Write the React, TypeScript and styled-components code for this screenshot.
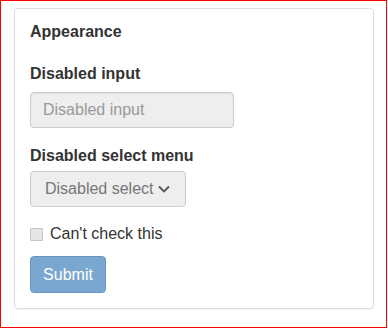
import styled, { createGlobalStyle } from 'styled-components'

export default function App() {
  return (
    <>
      <GlobalStyle />
      <Frame>
        <Card>
          <Title>Appearance</Title>

          <Field $gap={8} $after={18}>
            <Label>Disabled input</Label>
            <TextInput disabled placeholder="Disabled input" />
          </Field>

          <Field $gap={5} $after={17}>
            <Label>Disabled select menu</Label>
            <SelectBox aria-disabled="true">
              <span>Disabled select</span>
              <svg width="12" height="8" viewBox="0 0 12 8" aria-hidden="true">
                <path d="M1 1.5l5 5 5-5" fill="none" stroke="#555" strokeWidth="1.8" />
              </svg>
            </SelectBox>
          </Field>

          <CheckRow>
            <CheckBox type="checkbox" disabled />
            <span>Can&apos;t check this</span>
          </CheckRow>

          <SubmitBtn disabled>Submit</SubmitBtn>
        </Card>
      </Frame>
    </>
  )
}

// ─── Styles ───────────────────────────────────────

const GlobalStyle = createGlobalStyle`
  * {
    box-sizing: border-box;
  }

  body {
    margin: 0;
    background: #fff;
    font-family: 'Liberation Sans', Arial, sans-serif;
    color: #333;
  }
`

const Frame = styled.div`
  width: 387px;
  height: 328px;
  border: 1px solid #f00;
  padding: 7px 13px 0 13px;
`

const Card = styled.div`
  width: 360px;
  border: 1px solid #ddd;
  border-radius: 4px;
  box-shadow: 0 1px 1px rgba(0, 0, 0, 0.05);
  padding: 13px 15px 15px;
  display: flex;
  flex-direction: column;
`

const Title = styled.h3`
  margin: 0 0 22px;
  font-size: 16px;
  font-weight: 700;
  line-height: 20px;
`

const Field = styled.div<{ $gap: number; $after: number }>`
  display: flex;
  flex-direction: column;
  align-items: flex-start;
  gap: ${({ $gap }) => $gap}px;
  margin-bottom: ${({ $after }) => $after}px;
`

const Label = styled.label`
  font-size: 16px;
  font-weight: 700;
  line-height: 20px;
`

const TextInput = styled.input`
  width: 204px;
  height: 36px;
  padding: 6px 12px;
  font: inherit;
  font-size: 16px;
  background: #eee;
  border: 1px solid #ccc;
  border-radius: 4px;
  box-shadow: inset 0 1px 1px rgba(0, 0, 0, 0.075);
  cursor: not-allowed;

  &::placeholder {
    color: #999;
  }
`

const SelectBox = styled.div`
  width: 156px;
  height: 36px;
  padding: 0 12px 0 14px;
  display: flex;
  align-items: center;
  gap: 4px;
  font-size: 16px;
  color: #777;
  background: #eee;
  border: 1px solid #ccc;
  border-radius: 4px;
  cursor: not-allowed;
  white-space: nowrap;
`

const CheckRow = styled.label`
  display: flex;
  align-items: center;
  gap: 7px;
  font-size: 16px;
  line-height: 20px;
  color: #333;
`

const CheckBox = styled.input`
  appearance: none;
  width: 13px;
  height: 13px;
  margin: 0;
  background: #e6e6e6;
  border: 1px solid #c4c4c4;
  border-radius: 1px;
`

const SubmitBtn = styled.button`
  align-self: flex-start;
  flex-shrink: 0;
  margin-top: 12px;
  width: 76px;
  height: 37px;
  padding: 0;
  font: inherit;
  font-size: 16px;
  color: #fff;
  background: #7aa7d0;
  border: 1px solid #6b93bb;
  border-radius: 4px;
  cursor: not-allowed;
`
